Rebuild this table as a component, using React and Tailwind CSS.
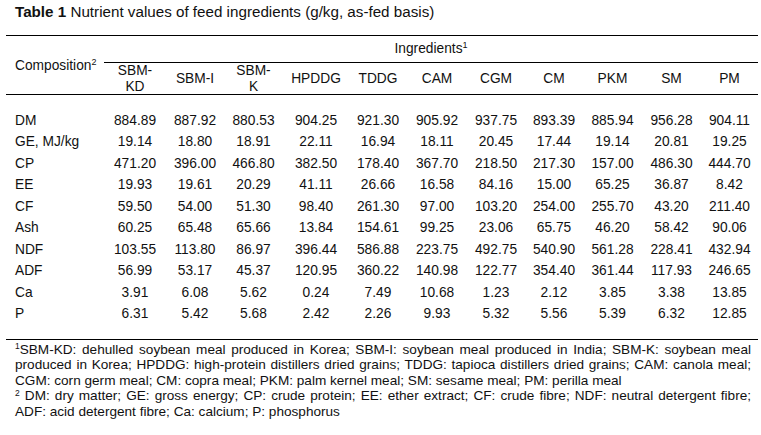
import React from 'react';

const columns = [
    ['SBM-', 'KD'],
    ['SBM-I'],
    ['SBM-', 'K'],
    ['HPDDG'],
    ['TDDG'],
    ['CAM'],
    ['CGM'],
    ['CM'],
    ['PKM'],
    ['SM'],
    ['PM'],
];

const rows = [
    ['DM', '884.89', '887.92', '880.53', '904.25', '921.30', '905.92', '937.75', '893.39', '885.94', '956.28', '904.11'],
    ['GE, MJ/kg', '19.14', '18.80', '18.91', '22.11', '16.94', '18.11', '20.45', '17.44', '19.14', '20.81', '19.25'],
    ['CP', '471.20', '396.00', '466.80', '382.50', '178.40', '367.70', '218.50', '217.30', '157.00', '486.30', '444.70'],
    ['EE', '19.93', '19.61', '20.29', '41.11', '26.66', '16.58', '84.16', '15.00', '65.25', '36.87', '8.42'],
    ['CF', '59.50', '54.00', '51.30', '98.40', '261.30', '97.00', '103.20', '254.00', '255.70', '43.20', '211.40'],
    ['Ash', '60.25', '65.48', '65.66', '13.84', '154.61', '99.25', '23.06', '65.75', '46.20', '58.42', '90.06'],
    ['NDF', '103.55', '113.80', '86.97', '396.44', '586.88', '223.75', '492.75', '540.90', '561.28', '228.41', '432.94'],
    ['ADF', '56.99', '53.17', '45.37', '120.95', '360.22', '140.98', '122.77', '354.40', '361.44', '117.93', '246.65'],
    ['Ca', '3.91', '6.08', '5.62', '0.24', '7.49', '10.68', '1.23', '2.12', '3.85', '3.38', '13.85'],
    ['P', '6.31', '5.42', '5.68', '2.42', '2.26', '9.93', '5.32', '5.56', '5.39', '6.32', '12.85'],
];

// same column template for header and body rows
const grid = 'grid grid-cols-[98px_62px_58px_59px_66px_58px_60px_58px_58px_59px_59px_57px]';

export default function App() {
    return (
        <div className="w-[761px] h-[435px] bg-white text-[#111] font-['Liberation_Sans',Arial,sans-serif] overflow-hidden">
            <div className="pl-[15px] pt-[3px] h-[35px] text-[15.2px] leading-[17px]">
                <span className="font-bold">Table 1</span> Nutrient values of feed ingredients (g/kg, as-fed basis)
            </div>

            <div className="ml-[6px] w-[752px] text-[13.75px]">
                {/* header */}
                <div className={`${grid} border-t border-b border-black`}>
                    <div className="row-span-2 flex items-center pl-[9px] pt-[2px]">
                        <span>
                            Composition<sup className="text-[9px]">2</sup>
                        </span>
                    </div>
                    <div className="col-span-11 h-[27px] border-b border-black flex items-center justify-center">
                        <span>
                            Ingredients<sup className="text-[9px]">1</sup>
                        </span>
                    </div>
                    {columns.map((c, i) => (
                        <div key={i} className="h-[31px] flex flex-col items-center justify-center leading-[16px] text-center">
                            {c.map((line, j) => (
                                <span key={j}>{line}</span>
                            ))}
                        </div>
                    ))}
                </div>

                {/* body */}
                <div className="pt-[15px] pb-[14px] border-b border-black">
                    {rows.map((r) => (
                        <div key={r[0]} className={`${grid} h-[21.5px] items-center leading-[16px]`}>
                            <div className="pl-[9px]">{r[0]}</div>
                            {r.slice(1).map((v, i) => (
                                <div key={i} className="text-center">{v}</div>
                            ))}
                        </div>
                    ))}
                </div>

                {/* footnotes */}
                <div className="pl-[9px] pr-[7px] pt-[1.5px] text-[13.6px] leading-[15.5px]">
                    <div className="text-justify [text-align-last:justify]">
                        <sup className="text-[8.5px]">1</sup>SBM-KD: dehulled soybean meal produced in Korea; SBM-I: soybean meal produced in India; SBM-K: soybean meal
                    </div>
                    <div className="text-justify [text-align-last:justify]">
                        produced in Korea; HPDDG: high-protein distillers dried grains; TDDG: tapioca distillers dried grains; CAM: canola meal;
                    </div>
                    <div>CGM: corn germ meal; CM: copra meal; PKM: palm kernel meal; SM: sesame meal; PM: perilla meal</div>
                    <div className="text-justify [text-align-last:justify]">
                        <sup className="text-[8.5px]">2</sup> DM: dry matter; GE: gross energy; CP: crude protein; EE: ether extract; CF: crude fibre; NDF: neutral detergent fibre;
                    </div>
                    <div>ADF: acid detergent fibre; Ca: calcium; P: phosphorus</div>
                </div>
            </div>
        </div>
    );
}
